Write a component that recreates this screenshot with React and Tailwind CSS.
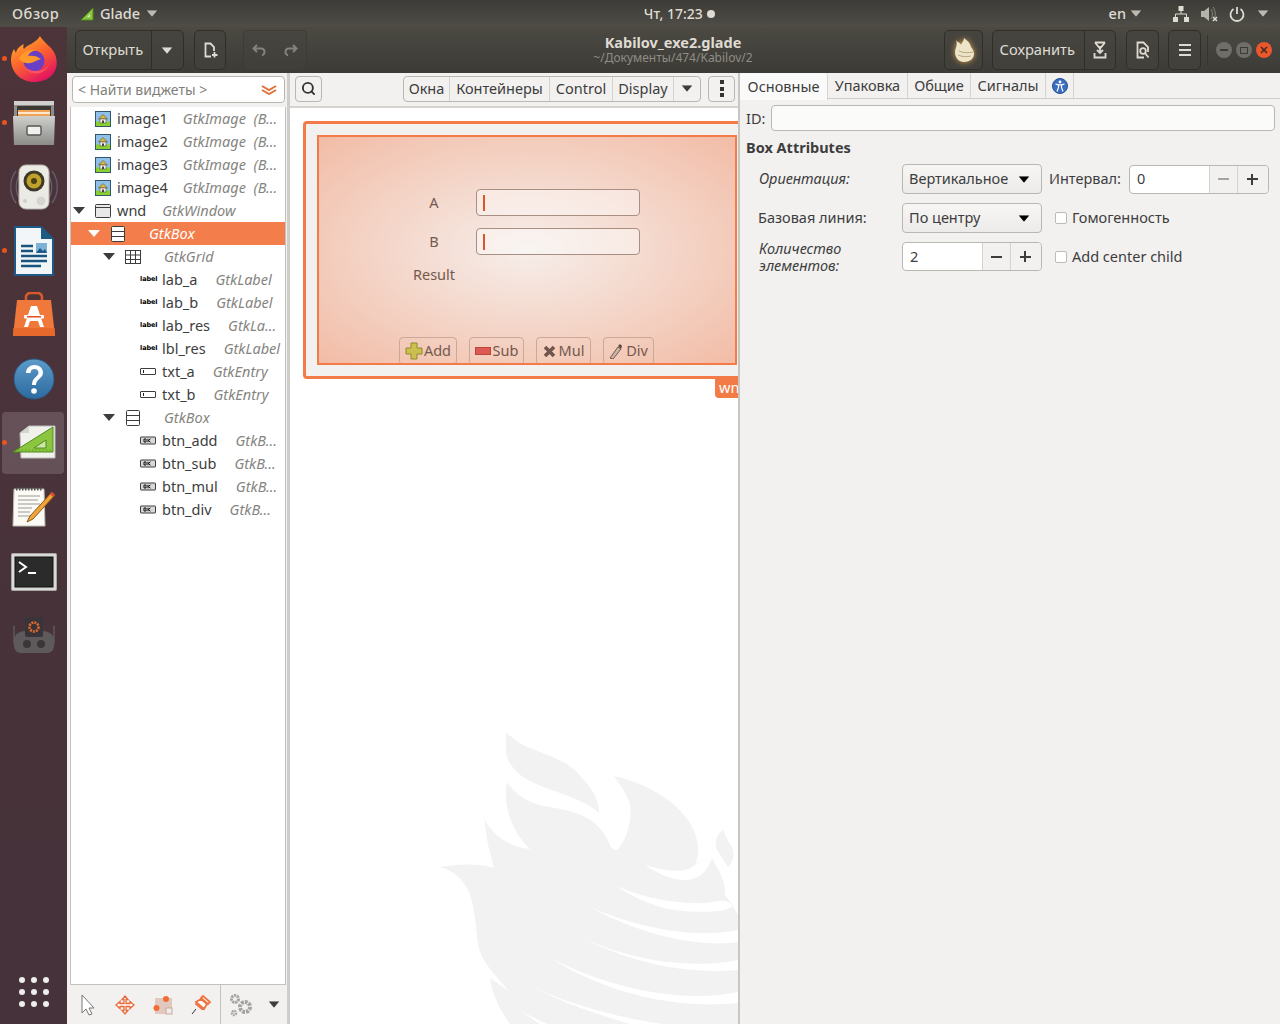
import { Search } from 'lucide-react'

// ── tree data ──
const treeRows = [
  { pad: 'pl-[24px]', icon: 'image', name: 'image1', gap: 'mr-[15px]', type: 'GtkImage  (B…' },
  { pad: 'pl-[24px]', icon: 'image', name: 'image2', gap: 'mr-[15px]', type: 'GtkImage  (B…' },
  { pad: 'pl-[24px]', icon: 'image', name: 'image3', gap: 'mr-[15px]', type: 'GtkImage  (B…' },
  { pad: 'pl-[24px]', icon: 'image', name: 'image4', gap: 'mr-[15px]', type: 'GtkImage  (B…' },
  { pad: 'pl-[2px]', tri: true, icon: 'window', name: 'wnd', gap: 'mr-[16px]', type: 'GtkWindow' },
  { pad: 'pl-[17px]', tri: true, icon: 'box', type: 'GtkBox', selected: true },
  { pad: 'pl-[32px]', tri: true, icon: 'grid', type: 'GtkGrid' },
  { pad: 'pl-[69px]', icon: 'label', name: 'lab_a', type: 'GtkLabel' },
  { pad: 'pl-[69px]', icon: 'label', name: 'lab_b', type: 'GtkLabel' },
  { pad: 'pl-[69px]', icon: 'label', name: 'lab_res', type: 'GtkLa…' },
  { pad: 'pl-[69px]', icon: 'label', name: 'lbl_res', type: 'GtkLabel' },
  { pad: 'pl-[69px]', icon: 'entry', name: 'txt_a', type: 'GtkEntry' },
  { pad: 'pl-[69px]', icon: 'entry', name: 'txt_b', type: 'GtkEntry' },
  { pad: 'pl-[32px]', tri: true, icon: 'box', type: 'GtkBox' },
  { pad: 'pl-[69px]', icon: 'button', name: 'btn_add', type: 'GtkB…' },
  { pad: 'pl-[69px]', icon: 'button', name: 'btn_sub', type: 'GtkB…' },
  { pad: 'pl-[69px]', icon: 'button', name: 'btn_mul', type: 'GtkB…' },
  { pad: 'pl-[69px]', icon: 'button', name: 'btn_div', type: 'GtkB…' },
]

const Tri = ({ className = '' }) => (
  <svg width="12" height="7" viewBox="0 0 12 7" className={className}><path d="M0 0h12L6 7z" fill="currentColor" /></svg>
)

function TreeIcon({ kind }) {
  const c = '#3d3d3d'
  if (kind === 'image') return (
    <svg width="16" height="16" viewBox="0 0 16 16">
      <rect x=".5" y=".5" width="15" height="15" fill="#8fc0ea" stroke="#33566f" />
      <rect x="1" y="10.500" width="14" height="4.500" fill="#8ad02f" />
      <path d="M3.500 8 8 3.500 12.500 8z" fill="#d9b84a" stroke="#5e4f1a" strokeWidth=".6" />
      <rect x="5" y="8" width="6" height="4" fill="#f4f1e6" stroke="#555" strokeWidth=".6" />
      <rect x="7" y="9.500" width="2" height="2.500" fill="#444" />
    </svg>
  )
  if (kind === 'window') return (
    <svg width="16" height="16" viewBox="0 0 16 16">
      <rect x=".5" y="1.500" width="15" height="13" rx="1" fill="#e8e8e8" stroke={c} />
      <path d="M1 4.500h14" stroke={c} />
    </svg>
  )
  if (kind === 'box') return (
    <svg width="16" height="16" viewBox="0 0 16 16">
      <rect x="1.500" y=".5" width="13" height="15" rx="1" fill="#fff" stroke={c} />
      <path d="M2 5.500h12M2 10.500h12" stroke={c} />
    </svg>
  )
  if (kind === 'grid') return (
    <svg width="16" height="16" viewBox="0 0 16 16" fill="none" stroke={c}>
      <rect x=".5" y="1.500" width="15" height="13" />
      <path d="M5.500 2v12M10.500 2v12M1 6h14M1 10.500h14" />
    </svg>
  )
  if (kind === 'label') return (
    <span className="w-[16px] text-[6.500px] leading-none font-bold text-black font-['DejaVu_Sans',sans-serif] tracking-[-0.1px]">label</span>
  )
  if (kind === 'entry') return (
    <svg width="16" height="16" viewBox="0 0 16 16">
      <rect x=".5" y="4.500" width="15" height="6" rx=".5" fill="#fff" stroke={c} />
      <path d="M3.500 6v3" stroke="#222" />
    </svg>
  )
  return (
    <svg width="16" height="16" viewBox="0 0 16 16">
      <rect x=".5" y="4" width="15" height="7" rx=".5" fill="#d8d8d8" stroke={c} />
      <path d="M4 6h2v3H4zM8 5.800v3.400M10.500 5.800 8.300 7.500l2.200 1.700" fill="none" stroke="#111" />
    </svg>
  )
}

function TreeRow({ row }) {
  return (
    <div className={`flex items-center h-[23px] whitespace-pre ${row.pad} ${row.selected ? 'bg-[#f37d4b] text-white' : 'text-[#3d3d3d]'}`}>
      {row.tri && <div className="w-[22px] flex items-center"><Tri className={row.selected ? 'text-white' : 'text-[#3d3d3d]'} /></div>}
      <TreeIcon kind={row.icon} />
      {row.name && <span className={`ml-[6px] ${row.gap || 'mr-[18px]'}`}>{row.name}</span>}
      <span className={`italic ${row.selected ? 'text-white' : 'text-[#85857f]'} ${row.name ? '' : 'ml-[23px]'}`}>{row.type}</span>
    </div>
  )
}

// ── dock icons ──
const Firefox = () => (
  <svg width="48" height="48" viewBox="0 0 48 48">
    <defs>
      <linearGradient id="ff" x1="0" y1="0" x2=".6" y2="1"><stop offset="0" stopColor="#ffbd2e" /><stop offset=".5" stopColor="#ff6a2b" /><stop offset="1" stopColor="#e3175f" /></linearGradient>
    </defs>
    <path d="M30 1c3 6 12 11 15 18 3 8 2 15-2 20-5 6-12 8-19 8C11 47 1 37 1 25c0-4 1-8 3-11l2 4c1-5 4-7 8-9-1 2-1 4 0 5 4-5 11-5 16-13z" fill="url(#ff)" />
    <circle cx="24" cy="26" r="10.500" fill="#6b3fc4" />
    <path d="M9 24c3-7 10-10 17-9-4 1-7 3-8 6 5-1 9 0 13 3-5 1-13 9-22 0z" fill="#ff9a2a" />
    <path d="M14 31c2 6 9 9 16 7 5-2 9-6 10-12-1 6-7 10-14 10-5 0-9-2-12-5z" fill="#ff4f5e" />
  </svg>
)

const FilesIcon = () => (
  <svg width="44" height="46" viewBox="0 0 44 46">
    <defs><linearGradient id="fl" x1="0" y1="0" x2="0" y2="1"><stop offset="0" stopColor="#cfcfcb" /><stop offset="1" stopColor="#8b8b87" /></linearGradient></defs>
    <rect x="2" y="1" width="40" height="44" rx="2" fill="#8e8e8a" />
    <rect x="2" y="1" width="40" height="4" fill="#d0d0cc" />
    <rect x="5" y="6" width="34" height="10" fill="#3c3834" />
    <rect x="6" y="10" width="32" height="7" fill="#f0a257" />
    <rect x="6" y="12" width="32" height="2" fill="#fbe8cc" />
    <path d="M1 16h42l-1 29H2z" fill="url(#fl)" />
    <rect x="15" y="26" width="14" height="9" rx="1.500" fill="#f0f0ee" stroke="#555" strokeWidth="1.400" />
  </svg>
)

const Speaker = () => (
  <svg width="48" height="46" viewBox="0 0 48 46">
    <path d="M6 7C-1 16-1 30 6 39M42 7c7 9 7 23 0 32M10 11c-5 7-5 17 0 24M38 11c5 7 5 17 0 24" fill="none" stroke="#7d8aa0" strokeOpacity=".5" strokeWidth="1.300" />
    <rect x="9" y="1" width="30" height="44" rx="7" fill="#eceae4" stroke="#b8b6ae" />
    <circle cx="24" cy="17" r="10.500" fill="#3f3a28" />
    <circle cx="24" cy="17" r="7.500" fill="#c0a12a" />
    <circle cx="24" cy="17" r="3" fill="#4a3f16" />
    <circle cx="31" cy="37" r="4.500" fill="#d7d5cf" />
    <circle cx="15" cy="37" r="2" fill="#d0cec8" />
  </svg>
)

const Writer = () => (
  <svg width="40" height="50" viewBox="0 0 40 50">
    <path d="M1 1h26l12 12v36H1z" fill="#f3f6f8" stroke="#1d5a86" strokeWidth="2" />
    <path d="M27 1v12h12z" fill="#1d5a86" />
    <path d="M7 20h12M7 25h12M7 30h26M7 35h26M7 40h20" stroke="#18557f" strokeWidth="2.400" />
    <rect x="22" y="17" width="11" height="10" fill="#7fb1d6" />
    <path d="M22 27l4-5 3 3 2-2 2 4z" fill="#1d5a86" />
  </svg>
)

const Store = () => (
  <svg width="44" height="46" viewBox="0 0 44 46">
    <path d="M14 9V5c0-2 2-4 4-4h8c2 0 4 2 4 4v4" fill="none" stroke="#d95a28" strokeWidth="2.600" />
    <path d="M5 8h34l4 36H1z" fill="#f0783a" />
    <path d="M1.400 36h41.200l.4 8H1z" fill="#e8692c" />
    <path d="M22 14h-3l-7 21h4l2-6h8l2 6h4l-7-21z" fill="#fff" />
    <rect x="12" y="23" width="20" height="3.500" rx="1" fill="#fff" />
    <rect x="15" y="24" width="14" height="1.500" fill="#e94b22" />
  </svg>
)

const Help = () => (
  <svg width="42" height="42" viewBox="0 0 42 42">
    <defs><linearGradient id="hb" x1="0" y1="0" x2="0" y2="1"><stop offset="0" stopColor="#5d9bc9" /><stop offset="1" stopColor="#2c6aa0" /></linearGradient></defs>
    <circle cx="21" cy="21" r="20" fill="url(#hb)" stroke="#2a5a85" />
    <path d="M13 15c0-5 4-8 8.500-8S30 10 30 14.500c0 6-7 6.500-7 12.500h-4c0-8 6.500-8 6.500-12.500 0-2-1.800-3.500-4-3.500s-4 1.500-4 4z" fill="#fff" />
    <circle cx="21" cy="33" r="2.800" fill="#fff" />
  </svg>
)

const GladeIcon = () => (
  <svg width="44" height="36" viewBox="0 0 44 36">
    <path d="M8 8 17 1h26v32H9z" fill="#f1f1ec" stroke="#bbb" />
    <path d="M8 8l9-7v7z" fill="#d5d5d0" />
    <path d="M1 27 41 2v25z" fill="#8cc63f" stroke="#4f8a1e" />
    <path d="M22 23l12-8v8z" fill="#cfe7a6" stroke="#4f8a1e" />
    <path d="M6 25h34" stroke="#5d9a28" strokeDasharray="1.500 2" />
  </svg>
)

const Notepad = () => (
  <svg width="46" height="42" viewBox="0 0 46 42">
    <path d="M3 3h30l1 37H2z" fill="#fbfaf4" stroke="#bdbdb5" />
    <path d="M5 3h27" stroke="#555" strokeWidth="3" strokeDasharray="1.500 1.500" />
    <path d="M7 10h22M7 14h20M7 18h22M7 22h14M7 26h12M7 30h16" stroke="#9a9a94" />
    <path d="M41 6l3 3-22 24-6 3 3-6z" fill="#f2a33a" stroke="#8a5a1a" />
    <path d="M41 6l3 3-2 2-3-3z" fill="#e0453a" />
  </svg>
)

const Terminal = () => (
  <svg width="46" height="38" viewBox="0 0 46 38" className="translate-y-[1px]">
    <rect x=".5" y=".5" width="45" height="37" rx="1" fill="#d9d9d6" stroke="#a8a8a4" />
    <rect x="4" y="4" width="38" height="30" fill="#2b2b2b" stroke="#111" />
    <path d="M8 9l7 5-7 5" fill="none" stroke="#fff" strokeWidth="2" />
    <path d="M17 20h8" stroke="#fff" strokeWidth="2" />
  </svg>
)

const Robot = () => (
  <svg width="44" height="38" viewBox="0 0 44 38">
    <path d="M2 10v18M42 10v18" stroke="#5b5558" strokeWidth="1.600" />
    <path d="M2 24c0-6 6-9 12-9h16c6 0 12 3 12 9v6c0 4-3 7-7 7H9c-4 0-7-3-7-7z" fill="#5e5a5c" />
    <rect x="13" y="1" width="18" height="20" rx="2" fill="#38343a" />
    <circle cx="22" cy="11" r="4.500" fill="none" stroke="#e0682a" strokeWidth="2.600" strokeDasharray="2 1" />
    <circle cx="15" cy="28" r="4" fill="#3a3538" />
    <circle cx="29" cy="28" r="4" fill="#3a3538" />
  </svg>
)

const dockItems = [
  { icon: <Firefox />, running: true },
  { icon: <FilesIcon />, running: true },
  { icon: <Speaker /> },
  { icon: <Writer />, running: true },
  { icon: <Store /> },
  { icon: <Help /> },
  { icon: <GladeIcon />, running: true, active: true },
  { icon: <Notepad /> },
  { icon: <Terminal /> },
  { icon: <Robot /> },
]

function Dock() {
  return (
    <div className="w-[67px] shrink-0 flex flex-col bg-[linear-gradient(#4d333a,#45323a)]">
      {dockItems.map((item, i) => (
        <div key={i} className="relative h-[64px] flex items-center justify-center">
          {item.active && <div className="absolute left-[2px] right-[3px] top-[1px] bottom-[1px] rounded-[4px] bg-white/15" />}
          {item.running && <div className="absolute left-[2px] top-[29px] w-[5px] h-[5px] rounded-full bg-[#e9541f]" />}
          <div className="relative">{item.icon}</div>
        </div>
      ))}
      <div className="mt-auto pb-[17px] grid grid-cols-3 gap-[6px] w-[30px] mx-auto">
        {Array.from({ length: 9 }).map((_, i) => <div key={i} className="w-[6px] h-[6px] rounded-full bg-[#eeeeec]" />)}
      </div>
    </div>
  )
}

// ── header ──
const hdrBtn = 'h-[40px] flex items-center justify-center rounded-[5px] border border-[#2f2e2a] bg-[#45433e]/60 text-[#dfdbd2]'

function TopBar() {
  return (
    <div className="h-[27px] shrink-0 flex items-center bg-[linear-gradient(#3c3b37,#4f4d46)] text-[#dfdbd2] text-[14.500px] font-medium">
      <div className="w-[80px] pl-[12px] tracking-[0.5px]">Обзор</div>
      <svg width="14" height="14" viewBox="0 0 14 14"><path d="M1 13 13 1v12z" fill="#8cc63f" stroke="#4f8a1e" /><path d="M7 10l3-3v3z" fill="#dfeec0" /></svg>
      <span className="ml-[6px]">Glade</span>
      <Tri className="ml-[6px] text-[#bdbab2] scale-90" />
      <div className="flex-1 flex justify-center items-center pl-[92px] gap-[4px] text-[14px]">
        Чт, 17:23 <span className="w-[8px] h-[8px] rounded-full bg-[#dfdbd2]" />
      </div>
      <span className="mr-[4px]">en</span>
      <Tri className="mr-[31px] text-[#bdbab2] scale-90" />
      <svg width="16" height="16" viewBox="0 0 16 16" className="mr-[12px]" fill="#dfdbd2"><rect x="5.500" y="0" width="5" height="5" /><rect x="0" y="11" width="5" height="5" /><rect x="11" y="11" width="5" height="5" /><path d="M8 5v3M2.500 11V8h11v3" fill="none" stroke="#dfdbd2" /></svg>
      <svg width="17" height="16" viewBox="0 0 17 16" className="mr-[11px]"><path d="M0 5h3l5-4v14l-5-4H0z" fill="#b5b2aa" /><path d="M10 3c2 3 2 7 0 10M12 1c3 4 3 10 0 14" fill="none" stroke="#8a8780" /><path d="M12 11l4 4m0-4-4 4" stroke="#dfdbd2" strokeWidth="1.500" /></svg>
      <svg width="16" height="16" viewBox="0 0 16 16" fill="none" stroke="#dfdbd2" strokeWidth="1.800" className="mr-[12px]"><path d="M8 1v7" /><path d="M4.500 3a6.500 6.500 0 1 0 7 0" /></svg>
      <Tri className="mr-[11px] text-[#bdbab2] scale-90" />
    </div>
  )
}

function HeaderBar() {
  return (
    <div className="h-[46px] shrink-0 flex items-center bg-[linear-gradient(#4b4942,#3c3b36)] text-[#dfdbd2] text-[14.700px]">
      <div className="w-[335px] shrink-0 flex items-center pl-[8px]">
        <div className={`${hdrBtn} w-[109px]`}>
          <span className="w-[76px] pb-px pr-px text-center">Открыть</span>
          <div className="w-[33px] h-full border-l border-[#2f2e2a] flex items-center justify-center"><Tri className="scale-90" /></div>
        </div>
        <div className={`${hdrBtn} w-[32px] ml-[10px]`}>
          <svg width="16" height="16" viewBox="0 0 16 16" fill="none" stroke="#dfdbd2" strokeWidth="1.800"><path d="M9 14.500H3.500V1.500h5l3.500 3.500v4" /><path d="M12.500 10v5.500M10 13h5.500" /></svg>
        </div>
        <div className="h-[40px] w-[64px] ml-[17px] flex items-center justify-between px-[8px] rounded-[5px] border border-[#3c3b36] bg-[#45433e]/40">
          <svg width="14" height="12" viewBox="0 0 14 12" fill="none" stroke="#84827b" strokeWidth="2"><path d="M5 1 1.500 4.500 5 8M2 4.500h7c2 0 3.500 1.500 3.500 3.500S11 11 10 11" /></svg>
          <svg width="14" height="12" viewBox="0 0 14 12" fill="none" stroke="#84827b" strokeWidth="2"><path d="M9 1l3.500 3.500L9 8M12 4.500H5C3 4.500 1.500 6 1.500 8S3 11 4 11" /></svg>
        </div>
      </div>
      <div className="w-[542px] shrink-0 text-center">
        <div className="text-[14.500px] font-bold leading-[15px]">Kabilov_exe2.glade</div>
        <div className="text-[12px] leading-[15px] text-[#8f8d86]">~/Документы/474/Kabilov/2</div>
      </div>
      <div className="flex-1 flex items-center">
        <div className={`${hdrBtn} w-[39px]`}>
          <svg width="22" height="26" viewBox="0 0 22 26" className="drop-shadow-[0_0_3px_#d8a050]">
            <path d="M3 3c2 3 4 2 5 5 1-3 3-4 3-7 3 3 6 4 7 9 2 2 3 5 3 7 0 5-5 8-10 8S2 21 2 15c0-4 3-6 1-12z" fill="#eee4c8" />
            <path d="M6 14c4 2 9 2 14 1M5 18c4 2 9 2 13 1" stroke="#b9a67e" fill="none" />
          </svg>
        </div>
        <div className={`${hdrBtn} w-[124px] ml-[9px]`}>
          <span className="w-[92px] pb-px pr-[2px] text-center">Сохранить</span>
          <div className="w-[32px] h-full border-l border-[#2f2e2a] flex items-center justify-center">
            <svg width="14" height="18" viewBox="0 0 14 18" fill="none" stroke="#dfdbd2" strokeWidth="1.800"><path d="M2 1.500h10M2 1.500l5 6 5-6" /><path d="M7 5v6" /><path d="M4 9l3 3 3-3" /><path d="M1.500 12v4.500h11V12" /></svg>
          </div>
        </div>
        <div className={`${hdrBtn} w-[33px] ml-[10px]`}>
          <svg width="16" height="18" viewBox="0 0 16 18" fill="none" stroke="#dfdbd2" strokeWidth="1.800"><path d="M9 16.500H2.500v-15h6L13 6v5" /><circle cx="8" cy="10" r="2.800" /><path d="M10 12l3.500 4.500" /></svg>
        </div>
        <div className={`${hdrBtn} w-[33px] ml-[9px]`}>
          <svg width="14" height="12" viewBox="0 0 14 12" fill="#dfdbd2"><rect x="1" width="12" height="2" /><rect x="1" y="5" width="12" height="2" /><rect x="1" y="10" width="12" height="2" /></svg>
        </div>
        <div className="w-px h-[30px] ml-[6px] bg-[#35342f]" />
        <div className="flex items-center gap-[4px] ml-[8px]">
          <div className="w-[16px] h-[16px] rounded-full bg-[#6f6e68] flex items-center justify-center"><div className="w-[8px] h-[2px] bg-[#3c3b36]" /></div>
          <div className="w-[16px] h-[16px] rounded-full bg-[#6f6e68] flex items-center justify-center"><div className="w-[8px] h-[7px] border border-[#3c3b36]" /></div>
          <div className="w-[16px] h-[16px] rounded-full bg-[#e9572a] flex items-center justify-center">
            <svg width="8" height="8" viewBox="0 0 8 8" stroke="#3c2a20" strokeWidth="1.500"><path d="M1 1l6 6M7 1 1 7" /></svg>
          </div>
        </div>
      </div>
    </div>
  )
}

// ── left palette / tree ──
const toolIcons = [
  { w: 'w-[37px]', el: <svg width="16" height="22" viewBox="0 0 16 22" fill="#fff" stroke="#777"><path d="M2 1l12 13H9l3 6-3 1-3-6-4 4z" /></svg> },
  { w: 'w-[38px]', el: <svg width="20" height="20" viewBox="0 0 20 20" fill="#fff" stroke="#e8693a" strokeWidth="1.300"><path d="M10 1l3 3.500h-2V8.500h4v-2L19 10l-4 3.500v-2h-4v4h2L10 19l-3-3.500h2v-4H5v2L1 10l4-3.500v2h4v-4H7z" /></svg> },
  { w: 'w-[38px]', el: <svg width="20" height="20" viewBox="0 0 20 20"><rect x="2" y="3" width="17" height="16" fill="#e2c9c0" /><rect x="13" y="13" width="6" height="6" fill="#eee" stroke="#c9a99c" /><circle cx="13" cy="4" r="3" fill="#f26c36" /><circle cx="3.500" cy="13" r="3" fill="#f26c36" /></svg> },
  { w: 'w-[37px]', el: <svg width="22" height="22" viewBox="0 0 22 22" fill="#fff" stroke="#ef7440" strokeWidth="1.800"><path d="M13 2l7 6-2 2-7-6zM11 5l6 5-3 5-8-7zM7 8l-1 2 6 5 2-1" /><path d="M6 15l-4 5" stroke="#333" strokeWidth="1" /></svg> },
]

function LeftPanel() {
  return (
    <div className="w-[223px] shrink-0 flex flex-col bg-[#f2f1f0] border-r-[3px] border-[#cfcdc9]">
      <div className="h-[34px] shrink-0 pt-[3px] pl-[5px] pr-[2px]">
        <div className="h-[27px] flex items-center pl-[5px] pr-[7px] rounded-[4px] border border-[#b9b7b2] bg-white text-[#7f7f7a] text-[14px]">
          <span className="flex-1">&lt; Найти виджеты &gt;</span>
          <svg width="16" height="10" viewBox="0 0 16 10" fill="none" stroke="#e2703a" strokeWidth="2"><path d="M1 1l7 4 7-4M1 5l7 4 7-4" /></svg>
        </div>
      </div>
      <div className="flex-1 ml-[3px] mr-[1px] border-x border-b border-[#c4c2bd] bg-white overflow-hidden">
        {treeRows.map((r, i) => <TreeRow key={i} row={r} />)}
      </div>
      <div className="h-[39px] shrink-0 flex items-center pl-[2px]">
        {toolIcons.map((t, i) => <div key={i} className={`${t.w} flex justify-center`}>{t.el}</div>)}
        <div className="w-px h-full ml-[1px] bg-[#c4c2bd]" />
        <div className="w-[40px] flex justify-center">
          <svg width="26" height="24" viewBox="0 0 26 24" fill="none" stroke="#a3a3a0"><circle cx="7" cy="6" r="3.500" strokeWidth="3" strokeDasharray="2.200 .8" /><circle cx="17" cy="14" r="5" strokeWidth="4" strokeDasharray="2.800 1" /><circle cx="6" cy="20" r="2" strokeWidth="2.500" strokeDasharray="1.500 .7" /></svg>
        </div>
        <Tri className="ml-[7px] text-[#3d3d3d] scale-90" />
      </div>
    </div>
  )
}

// ── center: canvas ──
const gtkBtn = 'h-[26px] flex items-center justify-center border-[#b9b7b2] bg-[#f2f1f0]'

const Watermark = () => (
  <svg viewBox="0 0 308 304" width="308" height="304" className="absolute right-0 bottom-0">
    <path fill="#f2f2f2" d="M76 13C80 14 84 22 100 28C125 38 140 42 152 58C165 72 168 80 169 93C160 85 150 80 130 73C110 66 95 60 88 53C80 45 76 38 76 30Z" />
    <path fill="#f2f2f2" d="M293 110C286 115 284 122 287 130L298 147C305 140 305 130 300 124C297 119 295 114 293 110Z" />
    <path fill="#f2f2f2" d="M10 147C25 144 50 143 64 148L58 125L54 97C58 110 75 127 100 129C85 115 72 90 77 62C85 75 100 85 125 88C150 92 170 100 180 125C183 132 187 131 190 127C198 115 202 100 200 85C198 75 190 65 184 56C210 62 240 75 258 100C270 118 270 135 265 143L282 138C288 150 296 160 295 175L303 186L308 195V304H80C70 290 62 275 60 258L79 271C65 255 55 245 50 232C45 215 47 190 38 170C30 155 20 150 10 147Z" />
    <g fill="#ffffff">
      <path d="M215 145C235 151 258 155 267 143L282 138C278 150 270 160 255 160C240 160 225 152 215 145Z" />
      <path d="M185 165C215 180 255 184 275 183C290 181 295 178 303 186L295 190C280 193 245 193 225 185C205 178 195 172 185 165Z" />
      <path d="M160 187C200 205 260 220 308 210V222C270 228 210 215 160 187Z" />
      <path d="M137 210C190 240 260 250 308 240V250C250 255 190 240 137 210Z" />
      <path d="M119 237C170 265 250 285 308 272V283C240 290 170 270 119 237Z" />
      <path d="M103 267C140 285 190 298 233 304H200C170 295 130 282 103 267Z" />
      <path d="M92 292L117 304H110Z" />
    </g>
  </svg>
)

const CanvasEntry = () => (
  <div className="w-[164px] h-[27px] rounded-[4px] border border-[#a88f84] bg-white/40 flex items-center pl-[6px]">
    <div className="w-[2px] h-[16px] bg-[#d9562a]" />
  </div>
)

const canvasBtns = [
  { label: 'Add', w: 'w-[58px]', gap: 'ml-[1px]', icon: <svg width="18" height="18" viewBox="0 0 18 18"><path d="M6 1h6v5h5v6h-5v5H6v-5H1V6h5z" fill="#cdbf4e" stroke="#8f8a2e" /></svg> },
  { label: 'Sub', w: 'w-[55px]', gap: 'ml-[2px]', icon: <svg width="16" height="8" viewBox="0 0 16 8"><rect x=".5" y=".5" width="15" height="7" fill="#dd5a52" stroke="#b9463f" /></svg> },
  { label: 'Mul', w: 'w-[55px]', gap: 'ml-[3px]', icon: <svg width="13" height="13" viewBox="0 0 13 13" stroke="#72564c" strokeWidth="3.600"><path d="M2 2l9 9M11 2l-9 9" /></svg> },
  { label: 'Div', w: 'w-[51px]', gap: 'ml-[3px]', icon: <svg width="14" height="16" viewBox="0 0 14 16"><path d="M1 15l8-11 3 2-8 10z" fill="#cbb3a8" stroke="#75594e" /><path d="M9 3l2-2 2 2-1 3z" fill="#5d463d" /></svg> },
]

function Center() {
  return (
    <div className="w-[448px] shrink-0 flex flex-col">
      <div className="h-[35px] shrink-0 flex items-center bg-[#f2f1f0] border-b-2 border-[#d5d3cf] pb-[2px] pl-[5px] text-[#3d3d3d]">
        <div className={`${gtkBtn} w-[27px] rounded-[4px] border`}>
          <Search size={15} strokeWidth={3} color="#333" />
        </div>
        <div className={`${gtkBtn} ml-[81px] rounded-[4px] border`}>
          <span className="w-[46px] h-full pt-px flex items-center justify-center border-r border-[#d5d3cf]">Окна</span>
          <span className="w-[100px] h-full pt-px flex items-center justify-center border-r border-[#d5d3cf]">Контейнеры</span>
          <span className="w-[63px] h-full pt-px flex items-center justify-center border-r border-[#d5d3cf]">Control</span>
          <span className="w-[61px] h-full pt-px flex items-center justify-center border-r border-[#d5d3cf]">Display</span>
          <span className="w-[26px] h-full flex items-center justify-center"><Tri className="scale-90" /></span>
        </div>
        <div className={`${gtkBtn} ml-[7px] w-[27px] rounded-[4px] border flex-col gap-[2.500px]`}>
          <div className="w-[4px] h-[4px] bg-[#333]" /><div className="w-[4px] h-[4px] bg-[#333]" /><div className="w-[4px] h-[4px] bg-[#333]" />
        </div>
      </div>
      <div className="relative flex-1 bg-white overflow-hidden pl-[13px] pt-[13px]">
        <Watermark />
        <div className="relative w-[450px] h-[258px] rounded-[4px] border-[3px] border-[#f37b48] bg-[#f2f1f0] pl-[11px] pt-[11px]">
          <div className="relative w-[420px] h-[230px] overflow-hidden border-2 border-[#f37b48] bg-[radial-gradient(ellipse_at_center,#f6eeea_0%,#f2bca6_100%)] flex flex-col text-[#74594d]">
            <div className="h-[52px] shrink-0" />
            <div className="flex items-center pl-[78px]">
              <span className="w-[74px] mr-[5px] text-center">A</span>
              <CanvasEntry />
            </div>
            <div className="flex items-center pl-[78px] mt-[12px]">
              <span className="w-[74px] mr-[5px] text-center">B</span>
              <CanvasEntry />
            </div>
            <div className="pl-[78px] mt-[9px]">
              <span className="block w-[74px] text-center">Result</span>
            </div>
            <div className="absolute left-[80px] bottom-[-2px] flex gap-[12px]">
              {canvasBtns.map((b) => (
                <div key={b.label} className={`${b.w} h-[28px] rounded-[4px] border border-[#cba898] flex items-center justify-center`}>
                  {b.icon}<span className={b.gap}>{b.label}</span>
                </div>
              ))}
            </div>
          </div>
        </div>
        <div className="absolute left-[425px] top-[271px] w-[30px] h-[19px] rounded-bl-[4px] bg-[#f37b48] text-white leading-[17px] pl-[4px]">wnd</div>
      </div>
    </div>
  )
}

// ── right: properties ──
const Combo = ({ label }) => (
  <div className="w-[140px] h-[30px] shrink-0 flex items-center pl-[6px] pr-[11px] rounded-[4px] border border-[#b9b7b2] bg-[linear-gradient(#f7f6f5,#ecebe9)] text-[#3d3d3d]">
    <span className="flex-1">{label}</span>
    <Tri className="scale-90 text-black" />
  </div>
)

const Spin = ({ value, dim }) => (
  <div className="w-[140px] h-[29px] shrink-0 flex items-center rounded-[4px] border border-[#b9b7b2] bg-white">
    <span className="w-[79px] pl-[7px] text-[#3d3d3d]">{value}</span>
    <span className={`w-[29px] h-full flex items-center justify-center border-x border-[#d5d3cf] bg-[#f2f1f0] ${dim ? 'text-[#a5a4a0]' : 'text-[#3d3d3d]'}`}>
      <span className="w-[11px] h-[2px] bg-current" />
    </span>
    <span className="w-[30px] h-full pr-[2px] flex items-center justify-center rounded-r-[4px] bg-[#f2f1f0]">
      <span className="relative w-[11px] h-[2px] bg-[#3d3d3d]">
        <span className="absolute left-[4.500px] top-[-4.500px] w-[2px] h-[11px] bg-[#3d3d3d]" />
      </span>
    </span>
  </div>
)

const Check = ({ label }) => (
  <div className="flex items-center h-[29px] ml-[13px]">
    <span className="w-[12px] h-[12px] rounded-[2px] border border-[#bdbbb6] bg-white mr-[5px]" />
    <span className="text-[#3d3d3d]">{label}</span>
  </div>
)

const tabs = [
  { label: 'Основные', w: 'w-[88px]', active: true },
  { label: 'Упаковка', w: 'w-[80px]' },
  { label: 'Общие', w: 'w-[63px]' },
  { label: 'Сигналы', w: 'w-[75px]' },
]

function RightPanel() {
  return (
    <div className="flex-1 flex flex-col bg-[#f2f1f0] border-l-2 border-[#c8c6c2] text-[#3d3d3d]">
      <div className="h-[26px] shrink-0 flex border-b border-[#cfcdc9]">
        {tabs.map((t) => (
          <div key={t.label} className={`${t.w} pt-px flex items-center justify-center border-r border-[#d5d3cf] ${t.active ? 'bg-[#fbfafa] rounded-t-[3px] h-[27px]' : 'h-full'}`}>{t.label}</div>
        ))}
        <div className="w-[28px] h-full flex items-center justify-center border-r border-[#d5d3cf]">
          <svg width="16" height="16" viewBox="0 0 16 16"><circle cx="8" cy="8" r="7.500" fill="#3b6ec0" stroke="#24508f" /><circle cx="8" cy="4" r="1.400" fill="#fff" /><path d="M3.500 6l3 .8V9.500L5 13.500M12.500 6l-3 .8V9.500l1.500 4M6.500 6.800h3" fill="none" stroke="#fff" strokeWidth="1.200" /></svg>
        </div>
      </div>
      <div className="flex items-center h-[26px] mt-[6px] pl-[6px] pr-[5px]">
        <span className="w-[25px] pt-px">ID:</span>
        <div className="flex-1 h-[26px] rounded-[4px] border border-[#b9b7b2] bg-[#fbfbfa]" />
      </div>
      <div className="pl-[6px] mt-[6px] font-bold leading-[20px]">Box Attributes</div>
      <div className="flex items-center mt-[7px] pl-[19px]">
        <span className="w-[143px] italic">Ориентация:</span>
        <Combo label="Вертикальное" />
        <span className="w-[80px] ml-[7px]">Интервал:</span>
        <Spin value="0" dim />
      </div>
      <div className="flex items-center mt-[9px] pl-[18px]">
        <span className="w-[144px]">Базовая линия:</span>
        <Combo label="По центру" />
        <Check label="Гомогенность" />
      </div>
      <div className="flex items-start mt-[9px] pl-[19px]">
        <span className="w-[143px] italic leading-[17px] -mt-[2px]">Количество<br />элементов:</span>
        <Spin value="2" />
        <Check label="Add center child" />
      </div>
    </div>
  )
}

export default function App() {
  return (
    <div className="w-[1280px] h-[1024px] flex flex-col overflow-hidden font-['Noto_Sans',sans-serif] text-[14.500px]">
      <TopBar />
      <div className="flex-1 min-h-0 flex">
        <Dock />
        <div className="flex-1 min-w-0 flex flex-col">
          <HeaderBar />
          <div className="flex-1 min-h-0 flex">
            <LeftPanel />
            <Center />
            <RightPanel />
          </div>
        </div>
      </div>
    </div>
  )
}
